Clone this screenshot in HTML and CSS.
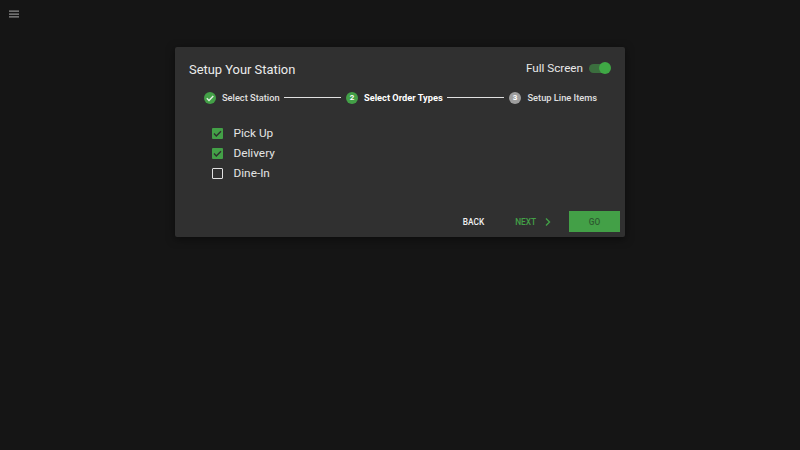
FILE: index.html
```html
<!DOCTYPE html>
<html lang="en">
<head>
<meta charset="utf-8">
<title>Setup Your Station</title>
<link rel="stylesheet" href="styles.css">
</head>
<body>
<header class="topbar">
  <svg class="menu" width="12" height="12" viewBox="0 0 12 12"><path d="M1 2.5h10v1.3H1zM1 5.4h10v1.3H1zM1 8.2h10v1.3H1z" fill="#8f8f8f"/></svg>
</header>
<main class="card">
  <div class="head">
    <h1 class="title">Setup Your Station</h1>
    <div class="fs">
      <span class="fs-label">Full Screen</span>
      <span class="switch"><span class="knob"></span></span>
    </div>
  </div>
  <div class="stepper">
    <span class="dot green"><svg width="12" height="12" viewBox="0 0 12 12"><path d="M2.8 6.2l2.2 2.2L9.3 4" fill="none" stroke="#e4efe4" stroke-width="1.4"/></svg></span>
    <span class="step-label">Select Station</span>
    <span class="line"></span>
    <span class="dot green">2</span>
    <span class="step-label active">Select Order Types</span>
    <span class="line"></span>
    <span class="dot grey">3</span>
    <span class="step-label last">Setup Line Items</span>
  </div>
  <ul class="options">
    <li class="option"><span class="box on"><svg width="11" height="11" viewBox="0 0 11 11"><path d="M2 5.6l2.3 2.3L9 3.2" fill="none" stroke="#2e2e2e" stroke-width="1.4"/></svg></span>Pick Up</li>
    <li class="option"><span class="box on"><svg width="11" height="11" viewBox="0 0 11 11"><path d="M2 5.6l2.3 2.3L9 3.2" fill="none" stroke="#2e2e2e" stroke-width="1.4"/></svg></span>Delivery</li>
    <li class="option"><span class="box"></span>Dine-In</li>
  </ul>
  <div class="actions">
    <span class="btn back">BACK</span>
    <span class="btn next">NEXT<svg width="8" height="10" viewBox="0 0 8 10"><path d="M2 1.5l3.5 3.5L2 8.5" fill="none" stroke="#43a047" stroke-width="1.4"/></svg></span>
    <span class="btn go">GO</span>
  </div>
</main>
</body>
</html>
```
FILE: styles.css
```css
* { box-sizing: border-box; }
html, body { margin: 0; height: 100%; }
body {
  background: #151515;
  font-family: Roboto, "Liberation Sans", sans-serif;
  color: #e8e8e8;
  overflow: hidden;
}
.topbar { height: 47px; padding: 8px 8px 0; }
.menu { display: block; }
.card {
  width: 450px;
  height: 190px;
  margin: 0 auto;
  background: #303030;
  border-radius: 2px;
  box-shadow: 0 2px 8px rgba(0,0,0,.5);
  display: flex;
  flex-direction: column;
}
.head {
  display: flex;
  justify-content: space-between;
  align-items: flex-start;
  padding: 12px 15px 0 14px;
  height: 36px;
}
.title { margin: 2px 0 0; font-size: 12.9px; font-weight: 400; color: #ececec; line-height: 18px; }
.fs { display: flex; align-items: center; gap: 6px; height: 18px; }
.fs-label { font-size: 11.7px; color: #e8e8e8; }
.switch {
  width: 21px; height: 9px; border-radius: 5px; background: #3b6e3e;
  display: block; position: relative;
}
.knob {
  position: absolute; right: -1px; top: -1.5px;
  width: 12px; height: 12px; border-radius: 50%; background: #3fa845;
}
.stepper {
  display: flex;
  align-items: center;
  padding: 0 28px 0 29px;
  height: 29px;
  font-size: 9.25px;
}
.dot {
  width: 12px; height: 12px; border-radius: 50%;
  display: flex; align-items: center; justify-content: center;
  font-size: 8px; font-weight: 700; color: #fff; flex: none;
}
.green { background: #43a047; }
.grey { background: #9e9e9e; }
.step-label { margin-left: 6px; color: #e0e0e0; white-space: nowrap; font-weight: 500; }
.step-label.active { color: #fff; font-weight: 700; }
.step-label.last { margin-left: 6.5px; }
.line { flex: 1; height: 1px; background: #e0e0e0; margin: 0 5px 0 4px; }
.options { list-style: none; margin: 0; padding: 11px 0 0 37px; flex: 1; }
.option {
  display: flex; align-items: center; height: 20px;
  font-size: 11.8px; color: #e4e4e4;
}
.box {
  width: 11px; height: 11px; border: 1.5px solid #e0e0e0; border-radius: 1px;
  margin-right: 10.5px; display: flex; align-items: center; justify-content: center;
}
.box.on { background: #43a047; border: 0; }
.actions {
  display: flex; align-items: center; justify-content: flex-end;
  padding: 0 5px 5px 0; height: 26px;
  font-size: 8.3px; font-weight: 500;
}
.btn { display: flex; align-items: center; justify-content: center; }
.back { color: #f0f0f0; margin-right: 31px; }
.next { color: #43a047; margin-right: 17px; gap: 8px; }
.go { width: 51px; height: 21px; background: #43a047; color: #2e5a30; }
```
